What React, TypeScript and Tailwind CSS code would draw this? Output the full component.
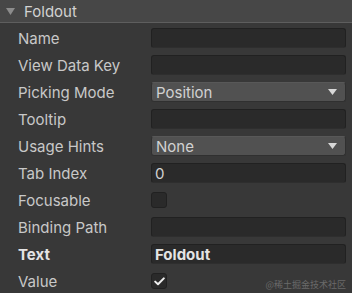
import React from "react";

const font = { fontFamily: "Inter, 'Noto Sans', sans-serif" };

function Field({ value, bold }: { value?: string; bold?: boolean }) {
  return (
    <div className="h-[20px] w-[195px] rounded-[3px] bg-[#2a2a2a] border border-[#212121] border-b-[#2e2e2e] flex items-center px-[3px]">
      {value && (
        <span className={`text-[15px] leading-none text-[#d2d2d2] ${bold ? "font-bold text-[#e4e4e4]" : ""}`}>{value}</span>
      )}
    </div>
  );
}

function Dropdown({ value }: { value: string }) {
  return (
    <div className="h-[20px] w-[195px] rounded-[3px] bg-[#515151] border border-[#303030] border-t-[#585858] flex items-center justify-between pl-[4px] pr-[8px]">
      <span className="text-[15px] leading-none text-[#d2d2d2]">{value}</span>
      <svg width="9" height="6" viewBox="0 0 9 6">
        <path d="M0 0 L9 0 L4.5 6 Z" fill="#d8d8d8" />
      </svg>
    </div>
  );
}

function Check({ checked }: { checked?: boolean }) {
  return (
    <div className="h-[16px] w-[16px] rounded-[3px] bg-[#2a2a2a] border border-[#212121] flex items-center justify-center">
      {checked && (
        <svg width="11" height="9" viewBox="0 0 11 9">
          <path d="M1.2 4.6 L4 7.3 L9.8 1.4" stroke="#eeeeee" strokeWidth="2" fill="none" strokeLinecap="round" strokeLinejoin="round" />
        </svg>
      )}
    </div>
  );
}

function Row({ label, bold, children }: { label: string; bold?: boolean; children: React.ReactNode }) {
  return (
    <div className="flex items-center h-[20px]">
      <div className={`w-[133px] text-[15px] leading-none ${bold ? "font-bold text-[#e4e4e4]" : "text-[#c8c8c8]"}`}>{label}</div>
      {children}
    </div>
  );
}

export default function App() {
  return (
    <div className="w-[352px] h-[293px] bg-[#383838] relative overflow-hidden" style={font}>
      <div className="h-[22px] bg-[#474747] flex items-center pl-[6px]">
        <svg width="9" height="7" viewBox="0 0 9 7" className="mr-[9px]">
          <path d="M0 0 L9 0 L4.5 7 Z" fill="#8c8c8c" />
        </svg>
        <span className="text-[15px] leading-none text-[#d2d2d2]">Foldout</span>
      </div>
      <div className="h-[1px] bg-[#5e5e5e]" />
      <div className="flex flex-col gap-[7px] pt-[5px] pl-[18px]">
        <Row label="Name"><Field /></Row>
        <Row label="View Data Key"><Field /></Row>
        <Row label="Picking Mode"><Dropdown value="Position" /></Row>
        <Row label="Tooltip"><Field /></Row>
        <Row label="Usage Hints"><Dropdown value="None" /></Row>
        <Row label="Tab Index"><Field value="0" /></Row>
        <Row label="Focusable"><Check /></Row>
        <Row label="Binding Path"><Field /></Row>
        <Row label="Text" bold><Field value="Foldout" bold /></Row>
        <Row label="Value"><Check checked /></Row>
      </div>
      <div className="absolute right-[6px] bottom-[4px] text-[9px] leading-none text-[#6a6a6a]" style={{ fontFamily: "'Noto Sans CJK SC', sans-serif" }}>
        @稀土掘金技术社区
      </div>
    </div>
  );
}
